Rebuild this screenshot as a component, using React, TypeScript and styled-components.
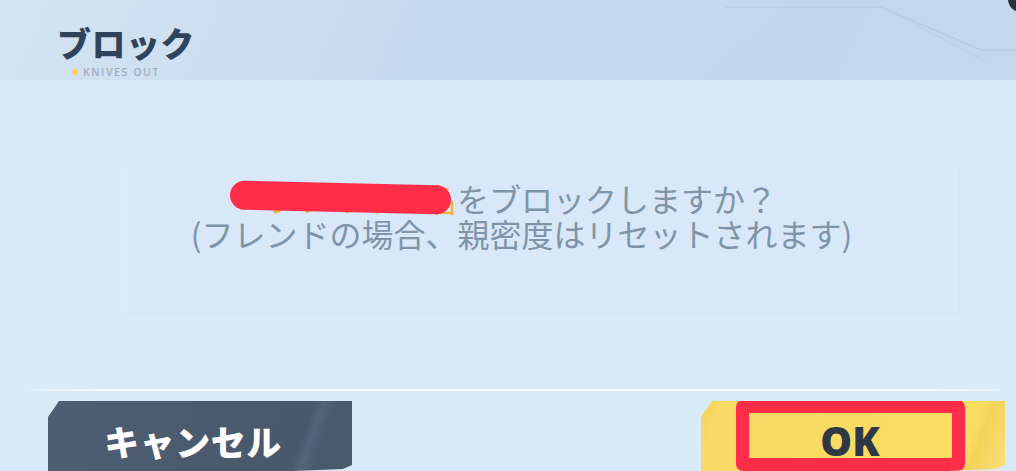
import React from 'react';
import styled, { createGlobalStyle } from 'styled-components';

const GlobalStyle = createGlobalStyle`
	html, body {
		margin: 0;
		padding: 0;
		background: #d9eaf9;
	}
	body {
		font-family: "Noto Sans CJK JP", "Noto Sans", sans-serif;
	}
`;

const Screen = styled.div`
	width: 1016px;
	height: 471px;
	overflow: hidden;
	display: flex;
	flex-direction: column;
	background: #d9eaf9;
	position: relative;
`;

const Header = styled.header`
	height: 80px;
	flex-shrink: 0;
	position: relative;
	box-sizing: border-box;
	padding: 24px 0 0 57px;
	background: linear-gradient(115deg, #d3e3f3 0%, #cbddf0 30%, #c4d8ed 45%, #c5d9ee 100%);
`;

const Title = styled.h1`
	margin: 0;
	font-size: 34px;
	line-height: 38px;
	font-weight: 900;
	color: #2f4359;
	letter-spacing: 0.5px;
`;

const Brand = styled.div`
	display: flex;
	align-items: center;
	gap: 5px;
	margin: 4px 0 0 15px;
	font-family: "Open Sans", "Liberation Sans", sans-serif;
	font-size: 10.5px;
	line-height: 12px;
	font-weight: 600;
	letter-spacing: 1.6px;
	color: #9fadbc;
`;

const Dot = styled.span`
	flex-shrink: 0;
	width: 6px;
	height: 6px;
	border-radius: 50%;
	background: #f6d54c;
`;

const Streak = styled.svg`
	position: absolute;
	top: 0;
	right: 0;
`;

const CloseEdge = styled.span`
	position: absolute;
	top: -14px;
	right: -18px;
	width: 26px;
	height: 26px;
	border-radius: 50%;
	background: #2a2f3a;
`;

const Body = styled.main`
	flex: 1;
	display: flex;
	flex-direction: column;
`;

const MessageArea = styled.section`
	height: 309px;
	box-sizing: border-box;
	padding: 88px 56px 0 125px;
	display: flex;
	flex-direction: column;
`;

const Panel = styled.div`
	height: 147px;
	box-sizing: border-box;
	padding: 13px 42px 0 0;
	background: rgba(214, 231, 248, 0.45);
	border-left: 2px solid rgba(255, 255, 255, 0.15);
	border-right: 2px solid rgba(205, 223, 242, 0.35);
`;

const Message = styled.p`
	margin: 0;
	font-size: 32px;
	line-height: 35px;
	color: #8094a7;
	white-space: nowrap;
	text-align: center;
`;

const Name = styled.span`
	position: relative;
	color: #f0b43a;
`;

const Redaction = styled.span`
	position: absolute;
	left: -36px;
	right: 6px;
	top: 8px;
	height: 29px;
	border-radius: 15px;
	background: #ff2d48;
	transform: rotate(1.4deg);
`;

const Divider = styled.hr`
	margin: 0 16px 0 28px;
	height: 2px;
	border: none;
	background: linear-gradient(90deg, rgba(255,255,255,0.2), rgba(255,255,255,0.85) 8%, rgba(255,255,255,0.85) 92%, rgba(255,255,255,0.3));
`;

const ButtonRow = styled.div`
	display: flex;
	justify-content: space-between;
	padding: 10px 11px 0 48px;
`;

const GameButton = styled.button<{ $tone: 'dark' | 'yellow' }>`
	position: relative;
	width: 304px;
	height: 80px;
	border: none;
	padding: 0;
	margin: 0;
	display: flex;
	align-items: center;
	justify-content: center;
	font-family: "Noto Sans CJK JP", "Noto Sans", sans-serif;
	font-weight: 900;
	clip-path: polygon(11px 0, 100% 0, 100% 80%, 97% 85%, 0 100%, 0 16px);
	background: ${(p) =>
		p.$tone === 'dark'
			? 'linear-gradient(110deg, #4f5d72 0%, #4a586c 80%, #55637a 83%, #4b596d 87%)'
			: 'linear-gradient(110deg, #f3d15a 0%, #f8da66 6%, #fbdc63 85%, #f4d35a 88%, #fbe07a 100%)'};
	color: ${(p) => (p.$tone === 'dark' ? '#ffffff' : '#2f3945')};
	cursor: pointer;
`;

const CancelLabel = styled.span`
	font-size: 35px;
	line-height: 40px;
	margin: 0 14px 0 0;
	letter-spacing: 0.5px;
`;

const OkLabel = styled.span`
	font-family: "Noto Sans", "Liberation Sans", sans-serif;
	font-size: 40px;
	line-height: 44px;
	font-weight: 900;
	margin: 0 6px 0 0;
`;

const Highlight = styled.span`
	position: absolute;
	top: -1px;
	left: 35px;
	width: 229px;
	height: 71px;
	box-sizing: border-box;
	border: 13px solid #ff2d48;
	border-radius: 7px;
`;

export default function App() {
	return (
		<>
			<GlobalStyle />
			<Screen>
				<Header>
					<Title>ブロック</Title>
					<Brand>
						<Dot />
						KNIVES OUT
					</Brand>
					<Streak width="420" height="80" viewBox="0 0 420 80">
						<path d="M100 80 L190 0 L420 0 L420 80 Z" fill="#c2d6ec" opacity="0.35" />
						<path d="M130 7 L285 7 L385 50 L420 50" stroke="#b9cde2" strokeWidth="1.5" fill="none" />
						<path d="M300 14 L390 62" stroke="#bccfe3" strokeWidth="1.2" fill="none" />
					</Streak>
					<CloseEdge />
				</Header>
				<Body>
					<MessageArea>
						<Panel>
							<Message>
								<Name>
									プレイヤー名
									<Redaction />
								</Name>
								をブロックしますか？
								<br />
								(フレンドの場合、親密度はリセットされます)
							</Message>
						</Panel>
					</MessageArea>
					<Divider />
					<ButtonRow>
						<GameButton $tone="dark">
							<CancelLabel>キャンセル</CancelLabel>
						</GameButton>
						<GameButton $tone="yellow">
							<OkLabel>OK</OkLabel>
							<Highlight />
						</GameButton>
					</ButtonRow>
				</Body>
			</Screen>
		</>
	);
}
